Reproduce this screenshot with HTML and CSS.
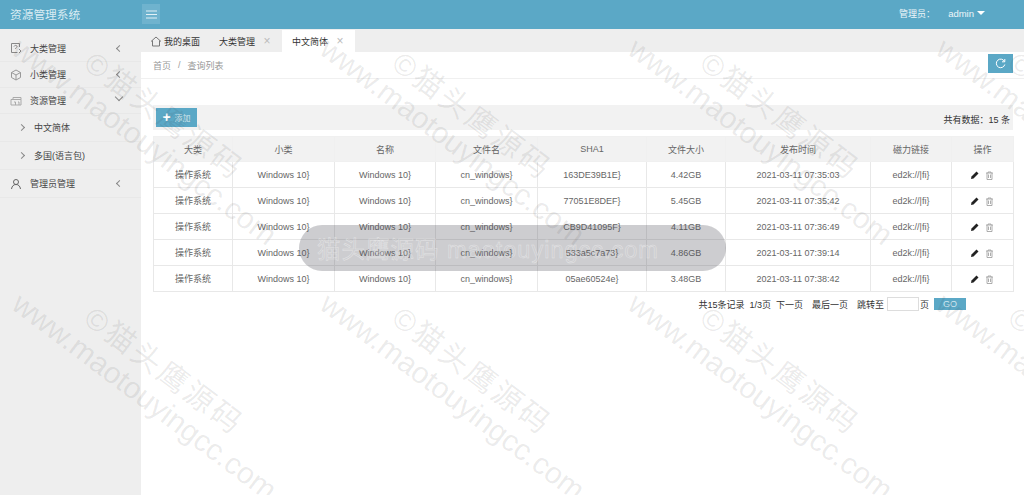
FILE: index.html
```
<!DOCTYPE html>
<html lang="zh-CN">
  <head>
    <meta charset="UTF-8" />
    <title>资源管理系统</title>
    <link rel="stylesheet" href="styles.css">
  </head>
  <body>
    <header class="topbar">
      <div class="logo">资源管理系统</div>
      <button class="menu-button">
        <svg width="13" height="9" viewBox="0 0 13 9"><path d="M1 1h11M1 4.500h11M1 8h11" stroke="#e3f1f6" stroke-width="1" fill="none"/></svg>
      </button>
      <div class="user">
        <span class="user-label">管理员：</span>
        <span class="user-name">admin</span>
        <span class="caret"></span>
      </div>
    </header>

    <div class="layout">
      <aside class="sidebar">
        <div class="side-item first">
          <svg class="side-icon" width="12" height="12" viewBox="0 0 12 12"><path d="M9.500 5V1.500h-8v9h6M4 4.500c.5-1.500 3-1.500 3 0 0 1-1.500 1-1.500 2.500M9 7l2 2-2 2" stroke="#888" fill="none"/></svg>
          <span class="side-text">大类管理</span><span class="chev left"></span>
        </div>
        <div class="side-item">
          <svg class="side-icon" width="12" height="12" viewBox="0 0 12 12"><path d="M6 1l4.500 2.500v5L6 11 1.500 8.500v-5zM1.500 3.500L6 6l4.500-2.500M6 6v5" stroke="#999" fill="none"/></svg>
          <span class="side-text">小类管理</span><span class="chev left"></span>
        </div>
        <div class="side-item">
          <svg class="side-icon" width="12" height="12" viewBox="0 0 12 12"><path d="M1 4.500h10v5.500H1zM3 4.500V2.500h8v2M4 7h1.500v3M8 7h1v3" stroke="#aaa" fill="none"/></svg>
          <span class="side-text">资源管理</span><span class="chev down"></span>
        </div>
        <div class="side-item sub tall">
          <span class="chev right"></span><span class="side-text">中文简体</span>
        </div>
        <div class="side-item sub tall">
          <span class="chev right"></span><span class="side-text">多国(语言包)</span>
        </div>
        <div class="side-item tall">
          <svg class="side-icon" width="12" height="12" viewBox="0 0 12 12"><path d="M6 1.500a2.500 2.500 0 1 1 0 5 2.500 2.500 0 0 1 0-5zM1.500 11c.5-3 2-4.500 4.500-4.500s4 1.500 4.500 4.500" stroke="#666" fill="none"/></svg>
          <span class="side-text">管理员管理</span><span class="chev left"></span>
        </div>
      </aside>

      <main class="content">
        <nav class="tabs">
          <div class="tab home">
            <svg width="12" height="11" viewBox="0 0 12 11"><path d="M1 5.500L6 1l5 4.500M2.500 4.500V10h7V4.500" stroke="#777" fill="none"/></svg>
            我的桌面
          </div>
          <div class="tab">大类管理<span class="close">×</span></div>
          <div class="tab active">中文简体<span class="close">×</span></div>
        </nav>

        <div class="crumbs">
          <span>首页</span><span class="crumb-sep">/</span><span>查询列表</span>
          <button class="refresh">
            <svg width="11" height="11" viewBox="0 0 11 11"><path d="M9.500 3.500A4.300 4.300 0 1 0 9.800 6.500M9.800 1v2.800H7" stroke="#fff" fill="none"/></svg>
          </button>
        </div>

        <div class="panel">
          <div class="toolbar">
            <button class="add-button"><span class="plus">+</span>添加</button>
            <span class="total">共有数据：15 条</span>
          </div>

          <table class="data-table">
            <colgroup>
              <col class="c1" /><col class="c2" /><col class="c3" /><col class="c4" /><col class="c5" />
              <col class="c6" /><col class="c7" /><col class="c8" /><col class="c9" />
            </colgroup>
            <thead>
              <tr><th>大类</th><th>小类</th><th>名称</th><th>文件名</th><th>SHA1</th><th>文件大小</th><th>发布时间</th><th>磁力链接</th><th>操作</th></tr>
            </thead>
            <tbody>
              <tr><td>操作系统</td><td>Windows 10}</td><td>Windows 10}</td><td>cn_windows}</td><td>163DE39B1E}</td><td>4.42GB</td><td>2021-03-11 07:35:03</td><td>ed2k://|fi}</td><td class="ops"><svg width="8" height="8" viewBox="0 0 8 8"><path d="M0 8l.5-2.500L5.500.5l2 2-5 5z" fill="#222"/></svg><svg width="9" height="9" viewBox="0 0 9 9"><path d="M1 2h7M3 2V1h3v1M2 2v6.500h5V2M3.500 3.500v3.500M5.500 3.500v3.500" stroke="#999" stroke-width=".8" fill="none"/></svg></td></tr>
              <tr><td>操作系统</td><td>Windows 10}</td><td>Windows 10}</td><td>cn_windows}</td><td>77051E8DEF}</td><td>5.45GB</td><td>2021-03-11 07:35:42</td><td>ed2k://|fi}</td><td class="ops"><svg width="8" height="8" viewBox="0 0 8 8"><path d="M0 8l.5-2.500L5.500.5l2 2-5 5z" fill="#222"/></svg><svg width="9" height="9" viewBox="0 0 9 9"><path d="M1 2h7M3 2V1h3v1M2 2v6.500h5V2M3.500 3.500v3.500M5.500 3.500v3.500" stroke="#999" stroke-width=".8" fill="none"/></svg></td></tr>
              <tr><td>操作系统</td><td>Windows 10}</td><td>Windows 10}</td><td>cn_windows}</td><td>CB9D41095F}</td><td>4.11GB</td><td>2021-03-11 07:36:49</td><td>ed2k://|fi}</td><td class="ops"><svg width="8" height="8" viewBox="0 0 8 8"><path d="M0 8l.5-2.500L5.500.5l2 2-5 5z" fill="#222"/></svg><svg width="9" height="9" viewBox="0 0 9 9"><path d="M1 2h7M3 2V1h3v1M2 2v6.500h5V2M3.500 3.500v3.500M5.500 3.500v3.500" stroke="#999" stroke-width=".8" fill="none"/></svg></td></tr>
              <tr><td>操作系统</td><td>Windows 10}</td><td>Windows 10}</td><td>cn_windows}</td><td>533a5c7a73}</td><td>4.86GB</td><td>2021-03-11 07:39:14</td><td>ed2k://|fi}</td><td class="ops"><svg width="8" height="8" viewBox="0 0 8 8"><path d="M0 8l.5-2.500L5.500.5l2 2-5 5z" fill="#222"/></svg><svg width="9" height="9" viewBox="0 0 9 9"><path d="M1 2h7M3 2V1h3v1M2 2v6.500h5V2M3.500 3.500v3.500M5.500 3.500v3.500" stroke="#999" stroke-width=".8" fill="none"/></svg></td></tr>
              <tr><td>操作系统</td><td>Windows 10}</td><td>Windows 10}</td><td>cn_windows}</td><td>05ae60524e}</td><td>3.48GB</td><td>2021-03-11 07:38:42</td><td>ed2k://|fi}</td><td class="ops"><svg width="8" height="8" viewBox="0 0 8 8"><path d="M0 8l.5-2.500L5.500.5l2 2-5 5z" fill="#222"/></svg><svg width="9" height="9" viewBox="0 0 9 9"><path d="M1 2h7M3 2V1h3v1M2 2v6.500h5V2M3.500 3.500v3.500M5.500 3.500v3.500" stroke="#999" stroke-width=".8" fill="none"/></svg></td></tr>
            </tbody>
          </table>

          <div class="pager">
            <span>共15条记录</span><span>1/3页</span><span>下一页</span><span class="gap">最后一页</span><span class="gap">跳转至</span>
            <input class="page-input" type="text" /><span class="tight">页</span>
            <button class="go">GO</button>
          </div>
        </div>
      </main>
    </div>

    <!-- watermark tiles and the pill lie over the whole page -->
    <div class="watermarks">
      <div class="tile"><span class="wm-url">www.maotouyingcc.com</span><span class="wm-name">©猫头鹰源码</span></div>
      <div class="tile"><span class="wm-url">www.maotouyingcc.com</span><span class="wm-name">©猫头鹰源码</span></div>
      <div class="tile"><span class="wm-url">www.maotouyingcc.com</span><span class="wm-name">©猫头鹰源码</span></div>
      <div class="tile"><span class="wm-url">www.maotouyingcc.com</span><span class="wm-name">©猫头鹰源码</span></div>
      <div class="tile"><span class="wm-url">www.maotouyingcc.com</span><span class="wm-name">©猫头鹰源码</span></div>
      <div class="tile"><span class="wm-url">www.maotouyingcc.com</span><span class="wm-name">©猫头鹰源码</span></div>
      <div class="tile"><span class="wm-url">www.maotouyingcc.com</span><span class="wm-name">©猫头鹰源码</span></div>
      <div class="tile"><span class="wm-url">www.maotouyingcc.com</span><span class="wm-name">©猫头鹰源码</span></div>
    </div>
    <div class="pill">猫头鹰源码 maotouyingcc.com</div>
  </body>
</html>
```

FILE: styles.css
```
:root {
  --blue: #5ba8c6;
  --side-bg: #eeeeee;
  --line: #e8e8e8;
  --font-family: "Liberation Sans", "Noto Sans CJK SC", sans-serif;
}

html,
body {
  height: 100%;
}

body {
  margin: 0;
  font-family: var(--font-family);
  font-size: 9px;
  color: #444;
  background-color: #fff;
  overflow: hidden;
  position: relative;
}

button {
  font-family: inherit;
  border: none;
  padding: 0;
  cursor: pointer;
}

/* Top bar */
.topbar {
  display: flex;
  align-items: center;
  height: 29px;
  background-color: var(--blue);
  color: #fff;
}

.logo {
  width: 132px;
  padding-left: 10px;
  padding-bottom: 3px;
  font-size: 11.700px;
  color: #d9ecf3;
}

.menu-button {
  display: flex;
  align-items: center;
  justify-content: center;
  width: 18px;
  height: 20px;
  margin-bottom: 1px;
  background-color: #6fb3ce;
}

.user {
  display: flex;
  align-items: center;
  margin-left: auto;
  padding-right: 39px;
  padding-bottom: 2px;
  color: #eef6f9;
}

.user-name {
  margin-left: 13px;
  font-size: 9.500px;
}

.caret {
  margin-left: 3px;
  margin-top: -2px;
  border-left: 4px solid transparent;
  border-right: 4px solid transparent;
  border-top: 4px solid #fff;
}

.layout {
  display: flex;
  height: 466px;
}

/* Sidebar */
.sidebar {
  width: 141px;
  flex-shrink: 0;
  padding-top: 6px;
  box-sizing: border-box;
  background-color: var(--side-bg);
}

.side-item {
  display: flex;
  align-items: center;
  height: 26px;
  padding-left: 10px;
  border-bottom: 1px solid #e8e8e8;
  box-sizing: border-box;
  color: #444;
}

.side-item.first {
  height: 27px;
}

.side-item.tall {
  height: 28px;
}

.side-item.sub {
  padding-left: 19px;
}

.side-icon {
  width: 12px;
  margin-right: 8px;
  flex-shrink: 0;
}

.side-text {
  flex-grow: 1;
}

.chev {
  width: 4px;
  height: 4px;
  margin-right: 19px;
  border-left: 1px solid #888;
  border-bottom: 1px solid #888;
  flex-shrink: 0;
}

.chev.left {
  transform: rotate(45deg);
}

.chev.down {
  width: 5px;
  height: 5px;
  margin-top: -8px;
  transform: rotate(-45deg);
}

.chev.right {
  margin-right: 10px;
  transform: rotate(225deg);
}

/* Main column */
.content {
  flex-grow: 1;
  min-width: 0;
}

.tabs {
  display: flex;
  align-items: flex-end;
  height: 23px;
  background-color: #eeeeee;
}

.tab {
  display: flex;
  align-items: center;
  height: 22px;
  padding: 0 11px 0 10px;
  color: #333;
}

.tab.home {
  padding-left: 9px;
  padding-right: 9px;
}

.tab.home svg {
  margin-right: 2px;
}

.tab.active {
  background-color: #fff;
}

.close {
  width: 8px;
  margin-left: 8px;
  color: #bbb;
  font-size: 12px;
  line-height: 1;
  text-align: center;
}

.crumbs {
  display: flex;
  align-items: center;
  height: 26px;
  padding-left: 12px;
  border-bottom: 1px solid #f0f0f0;
  color: #999;
}

.crumb-sep {
  margin: 0 7px;
}

.refresh {
  display: flex;
  align-items: center;
  justify-content: center;
  width: 25px;
  height: 19px;
  margin-left: auto;
  margin-right: 11px;
  margin-bottom: 3px;
  background-color: var(--blue);
}

.panel {
  padding: 26px 11px 0 12px;
}

.toolbar {
  display: flex;
  align-items: center;
  justify-content: space-between;
  height: 25px;
  padding-left: 3px;
  padding-right: 3px;
  background-color: #f2f2f2;
}

.add-button {
  display: flex;
  align-items: center;
  justify-content: center;
  width: 41px;
  height: 19px;
  margin-top: -1px;
  color: #d5e9f1;
  font-size: 8px;
  background-color: var(--blue);
}

.plus {
  margin-right: 4px;
  font-size: 14px;
  line-height: 1;
  font-weight: bold;
  color: #fff;
}

.total {
  padding-top: 4px;
  color: #333;
}

/* Table */
.data-table {
  width: 860px;
  margin-top: 6px;
  border-collapse: collapse;
  table-layout: fixed;
  text-align: center;
}

.c1 { width: 79px; }
.c2 { width: 102px; }
.c3 { width: 101px; }
.c4 { width: 102px; }
.c5 { width: 109px; }
.c6 { width: 79px; }
.c7 { width: 145px; }
.c8 { width: 81px; }
.c9 { width: 62px; }

.data-table th {
  height: 24px;
  padding: 0;
  font-weight: normal;
  color: #666;
  background-color: #f2f2f2;
  border: 1px solid #f0f0f0;
}

.data-table td {
  height: 25px;
  padding: 0;
  color: #666;
  border: 1px solid var(--line);
}

.ops svg {
  margin: 0 3px;
  vertical-align: middle;
}

/* Pagination */
.pager {
  display: flex;
  align-items: center;
  justify-content: flex-end;
  gap: 5px;
  height: 18px;
  margin-top: 3px;
  padding-right: 47px;
  color: #333;
}

.pager .gap {
  margin-left: 4px;
}

.page-input {
  width: 32px;
  height: 14px;
  padding: 0;
  margin-left: -2px;
  border: 1px solid #ddd;
  box-sizing: border-box;
}

.pager .tight {
  margin-left: -4px;
}

.go {
  width: 32px;
  height: 12px;
  font-size: 9px;
  color: #cfe6ef;
  background-color: var(--blue);
}

/* Overlays */
.watermarks {
  position: absolute;
  inset: 0;
  overflow: hidden;
  display: grid;
  grid-template-columns: repeat(4, 308px);
  grid-auto-rows: 255px;
  pointer-events: none;
}

.tile {
  position: relative;
}

.wm-url,
.wm-name {
  position: absolute;
  white-space: nowrap;
  transform: rotate(37deg);
  transform-origin: left center;
  color: rgba(60, 60, 60, 0.1);
  line-height: 1;
}

.wm-url {
  left: 16px;
  top: 30px;
  font-size: 30px;
}

.wm-name {
  left: 88px;
  top: 44px;
  font-size: 30px;
  letter-spacing: 3px;
}

.pill {
  position: absolute;
  left: 299px;
  top: 225px;
  width: 427px;
  height: 46px;
  padding-left: 18px;
  box-sizing: border-box;
  border-radius: 23px;
  display: flex;
  align-items: center;
  white-space: nowrap;
  font-size: 23.500px;
  letter-spacing: 1px;
  color: rgba(255, 255, 255, 0.05);
  -webkit-text-stroke: 0.5px rgba(255, 255, 255, 0.45);
  background-color: rgba(70, 72, 80, 0.27);
}
```
